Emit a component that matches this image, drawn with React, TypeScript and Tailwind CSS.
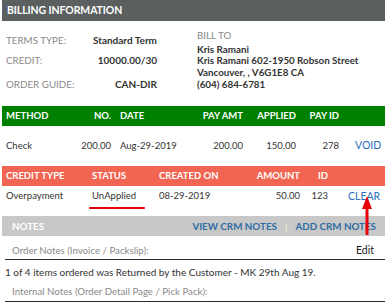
import React from "react";

const terms = [
  { label: "TERMS TYPE:", value: "Standard Term", cls: "mt-[13px]" },
  { label: "CREDIT:", value: "10000.00/30", cls: "mt-[8px]" },
  { label: "ORDER GUIDE:", value: "CAN-DIR", cls: "mt-[12px]" },
];

const billTo = [
  "Kris Ramani",
  "Kris Ramani 602-1950 Robson Street",
  "Vancouver, , V6G1E8 CA",
  "(604) 684-6781",
];

// ----------------------
// Column layouts
// ----------------------
const payCols = [
  "w-[64px]",
  "w-[41px] text-right",
  "w-[79px] pl-[9px]",
  "w-[53px] text-right",
  "w-[53px] text-right",
  "w-[43px] text-right",
  "pl-[16px]",
];

const creditCols = [
  "w-[86px]",
  "w-[67px]",
  "w-[81px]",
  "w-[60px] text-right",
  "w-[28px] text-right",
  "pl-[20px]",
];

const App = () => {
  return (
    <div className="relative w-[385px] h-[307px] overflow-hidden bg-white pl-[2px] font-['Lato',sans-serif] text-[#333]">
      {/* Header */}
      <div className="h-[21px] bg-[#5b5f5f] pl-[5px] flex items-center text-white font-bold text-[10.5px] tracking-[-0.1px]">
        BILLING INFORMATION
      </div>

      {/* Terms + bill to */}
      <div className="flex h-[85px]">
        <div className="flex flex-col w-[155px] pl-[4px]">
          {terms.map((t) => (
            <div key={t.label} className={`flex justify-between items-baseline leading-[12px] ${t.cls}`}>
              <span className="text-[#8a8a8a] text-[9.8px]">{t.label}</span>
              <span className="font-bold text-[10px] text-[#333]">{t.value}</span>
            </div>
          ))}
        </div>
        <div className="flex flex-col pl-[40px] pt-[8px]">
          <span className="text-[#8a8a8a] text-[9.8px] leading-[12px]">BILL TO</span>
          <div className="mt-[2.5px]">
            {billTo.map((line) => (
              <div key={line} className="font-bold text-[9.8px] leading-[11.7px] whitespace-nowrap">
                {line}
              </div>
            ))}
          </div>
        </div>
      </div>

      {/* Payments */}
      <div className="h-[20px] bg-[#008000] pl-[4px] flex items-center text-white font-bold text-[9.5px] whitespace-nowrap">
        {["METHOD", "NO.", "DATE", "PAY AMT", "APPLIED", "PAY ID", ""].map((h, i) => (
          <div key={i} className={payCols[i]}>{h}</div>
        ))}
      </div>
      <div className="h-[40px] pl-[4px] flex items-center text-[9.5px] whitespace-nowrap">
        {["Check", "200.00", "Aug-29-2019", "200.00", "150.00", "278"].map((v, i) => (
          <div key={i} className={payCols[i]}>{v}</div>
        ))}
        <div className={`${payCols[6]} text-[#2a6ebb] text-[10.5px]`}>VOID</div>
      </div>

      {/* Credits */}
      <div className="h-[20px] bg-[#f26552] pl-[4px] flex items-center text-white font-bold text-[9.5px] whitespace-nowrap">
        {["CREDIT TYPE", "STATUS", "CREATED ON", "AMOUNT", "ID", ""].map((h, i) => (
          <div key={i} className={creditCols[i]}>{h}</div>
        ))}
      </div>
      <div className="h-[30px] pl-[4px] pt-[4px] flex items-start leading-[12px] text-[9.5px] whitespace-nowrap">
        {["Overpayment", "UnApplied", "08-29-2019", "50.00", "123"].map((v, i) => (
          <div key={i} className={creditCols[i]}>{v}</div>
        ))}
        <div className={`${creditCols[5]} text-[#2a6ebb] text-[10.5px]`}>CLEAR</div>
      </div>

      {/* Notes */}
      <div className="h-[20px] bg-[#c8c8c8] pl-[10px] pr-[9px] flex items-center font-bold text-[9.8px] whitespace-nowrap">
        <span className="text-white">NOTES</span>
        <div className="ml-auto flex items-center gap-[8px] text-[#2e6da4]">
          <span>VIEW CRM NOTES</span>
          <span className="text-[#f3f0dc] font-normal">|</span>
          <span>ADD CRM NOTES</span>
        </div>
      </div>
      <div className="flex items-center h-[23px] pt-[4px] ml-[3px] pl-[7px] pr-[11px] text-[9.7px] leading-[12px]">
        <span className="text-[#8a8a8a]">Order Notes (Invoice / Packslip):</span>
        <span className="ml-auto text-[#222] text-[10.5px]">Edit</span>
      </div>
      <div className="ml-[3px] pt-[6px] border-t border-solid border-[#2b2b2b] text-[10px] leading-[12px] whitespace-nowrap">
        1 of 4 items ordered was Returned by the Customer - MK 29th Aug 19.
      </div>
      <div className="ml-[3px] pl-[7px] pt-[7px] pb-[4px] border-b border-solid border-[#2b2b2b] text-[9.7px] leading-[12px] text-[#8a8a8a]">
        Internal Notes (Order Detail Page / Pick Pack):
      </div>

      {/* Annotations */}
      <div className="absolute left-[89px] top-[207px] w-[56px] h-[2px] bg-[#e8000b] rounded-full" />
      <svg className="absolute left-[361px] top-[196px]" width="12" height="39" viewBox="0 0 12 39">
        <polygon points="6,0 11,13 1,13" fill="#e8000b" />
        <rect x="4.5" y="12" width="3" height="27" fill="#e8000b" />
      </svg>
    </div>
  );
};

export default App;
